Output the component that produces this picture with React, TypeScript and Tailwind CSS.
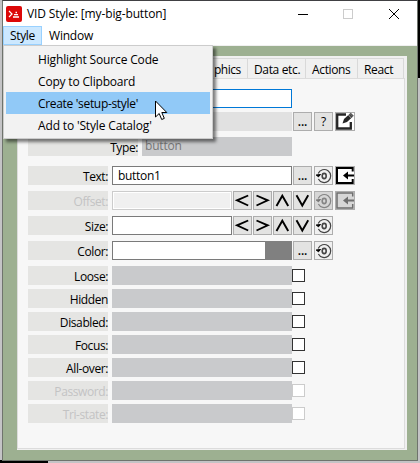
import React from 'react';

type Kids = { children?: React.ReactNode };

function Row({ label, dim, wide, gap, children }: Kids & { label?: string; dim?: boolean; wide?: boolean; gap: string }) {
  return (
    <div className={`flex h-[19px] ${gap}`}>
      <div
        className={`mr-1 flex h-[19px] shrink-0 justify-end bg-[#e5e5e3] leading-[21px] tracking-[-0.4px] ${wide ? 'w-[110px]' : 'w-20'} ${dim ? 'text-[#c3c3c3]' : 'text-black'}`}
      >
        {label}
      </div>
      {children}
    </div>
  );
}

function Btn({ children, ml, dim }: Kids & { ml: string; dim?: boolean }) {
  return (
    <div
      className={`flex h-[19px] w-[19px] shrink-0 items-center justify-center border border-[#adadad] ${dim ? 'bg-[#d6d6d6]' : 'bg-[#e3e3e2]'} ${ml}`}
    >
      {children}
    </div>
  );
}

function Dots() {
  return (
    <Btn ml="ml-px">
      <span className="font-semibold leading-[17px] tracking-[-0.2px]">...</span>
    </Btn>
  );
}

function Reset({ dim }: { dim?: boolean }) {
  const c = dim ? '#858585' : '#444';
  return (
    <Btn ml="ml-0.5" dim={dim}>
      <svg width="17" height="17" viewBox="0 0 17 17" fill="none">
        {!dim && <rect width="17" height="17" fill="#f0f0f0" />}
        <path d="M3.2 6.500A6.500 6.500 0 1 1 3.400 12" stroke={c} strokeWidth="1.200" />
        <path d="M1.200 8l2.300 1.800L5.500 7.500z" fill={dim ? '#777' : '#000'} stroke={dim ? '#777' : '#000'} />
        <ellipse cx="9.200" cy="9" rx="2" ry="2.600" stroke={c} strokeWidth="1.600" />
      </svg>
    </Btn>
  );
}

function Revert({ dim }: { dim?: boolean }) {
  const c = dim ? '#6e6e6e' : '#000';
  return (
    <svg className="ml-0.5 shrink-0" width="20" height="19" viewBox="0 0 20 19" fill="none">
      <rect x=".5" y=".5" width="19" height="18" fill={dim ? '#d6d6d6' : '#fff'} stroke="#adadad" />
      <path d="M17.700 5.500V2H2v15h15.700v-4" stroke={c} strokeWidth={dim ? 1.500 : 2} />
      <path d="M8 9.500l5-4v2.900h6v2.200h-6v2.900z" fill={c} />
    </svg>
  );
}

function Edit() {
  return (
    <svg className="ml-0.5 shrink-0" width="20" height="19" viewBox="0 0 20 19" fill="none">
      <rect x=".5" y=".5" width="19" height="18" fill="#fff" stroke="#adadad" />
      <path d="M11 2.500H2.200v14h13.600V10" stroke="#252525" strokeWidth="2.300" />
      <path d="M7.500 11.500l1.500-4.500 5.500-5 3 3-5.500 5z" fill="#252525" />
      <path d="M14.300 2l1.500-1.300 3 3L17.500 5z" fill="#555" />
      <path d="M13.200 2.800l3.300 3.300" stroke="#fff" strokeWidth=".7" />
    </svg>
  );
}

const arrows = ['M14.200 3.500L3 8.300l11.200 5.200', 'M2.500 3.500l11.200 4.800-11.200 5.200', 'M2.500 14L8.300 3.700 14.200 14', 'M2.500 3.200l5.800 10.300 5.900-10.300'];

function Arrows() {
  return (
    <>
      {arrows.map((d) => (
        <Btn key={d} ml="ml-px">
          <svg width="17" height="17" viewBox="0 0 17 17" fill="none">
            <path d={d} stroke="#000" strokeWidth="1.900" />
          </svg>
        </Btn>
      ))}
    </>
  );
}

const checks = [
  { label: 'Loose:', gap: 'mt-1.5' },
  { label: 'Hidden', gap: 'mt-1' },
  { label: 'Disabled:', gap: 'mt-1' },
  { label: 'Focus:', gap: 'mt-1' },
  { label: 'All-over:', gap: 'mt-1' },
  { label: 'Password:', gap: 'mt-1', dim: true },
  { label: 'Tri-state:', gap: 'mt-1', dim: true },
];

function Tab({ w, children }: Kids & { w: string }) {
  return (
    <div className={`h-5 shrink-0 border-r border-[#d9d9d9] bg-[#f0f0f0] pl-1.5 leading-[21px] tracking-[-0.35px] whitespace-nowrap ${w}`}>
      {children}
    </div>
  );
}

export default function App() {
  return (
    <div className="relative flex h-[463px] w-[420px] overflow-hidden bg-[#c4c4c6] font-['Open_Sans','Noto_Sans',sans-serif] text-[12px] text-black">
      <div className="flex h-[463px] w-0.5 shrink-0 flex-col justify-end">
        <div className="h-[3px] bg-black" />
      </div>
      <div className="flex w-[416px] shrink-0 flex-col">
        <div className="flex h-[461px] flex-col border border-t-[#404043] border-r-[#6f746d] border-b-[#6f746d] border-l-[#6f746d] bg-[#9db091]">
          <div className="flex h-[25px] shrink-0 items-center bg-white pl-[3px]">
            <svg width="16" height="16" viewBox="0 0 16 16" fill="none" className="shrink-0">
              <rect width="16" height="16" rx="2" fill="#dc0808" />
              <path d="M3 5l3 3-3 3" stroke="#fff" strokeWidth="1.200" />
              <path d="M7 11h6M8 8.700h4M9.500 6.500h1.500" stroke="#fff" strokeWidth="1.300" />
            </svg>
            <span className="ml-[5px] w-[180px] tracking-[-0.13px] whitespace-nowrap leading-[25px]">VID Style: [my-big-button]</span>
            <svg width="104" height="14" viewBox="0 0 104 14" fill="none" className="ml-[89px] shrink-0">
              <path d="M2 7.500h10" stroke="#000" />
              <rect x="47.500" y="2.500" width="9" height="9" stroke="#ccc" />
              <path d="M93 2l10 10M103 2L93 12" stroke="#000" />
            </svg>
          </div>
          <div className="flex h-[19px] shrink-0 bg-white leading-[19px]">
            <div className="w-[39px] border border-[#99d1ff] bg-[#cce8ff] pl-1.5 leading-[18px] tracking-[-0.35px]">Style</div>
            <div className="ml-[7px] leading-5 tracking-[-0.2px]">Window</div>
          </div>
          <div className="h-px shrink-0 bg-[#f0f0f0]" />
          <div className="mt-2.5 ml-3.5 flex h-[394px] w-[390px] flex-col bg-[#f0f0f0] pt-0.5">
            <div className="mr-[3px] flex h-5 border-t border-[#d9d9d9] pl-[182px]">
              <Tab w="w-[49px]">
                <span className="ml-[9px] tracking-[-0.5px]">phics</span>
              </Tab>
              <Tab w="w-[58px]">Data etc.</Tab>
              <Tab w="w-[52px]">Actions</Tab>
              <Tab w="w-[46px]">React</Tab>
            </div>
            <div className="mr-0.5 h-[371px] border border-[#dcdcdc] bg-[#f7f7f7] pt-2.5 pl-2.5">
              <Row gap="">
                <div className="w-[180px] border border-[#0078d7] bg-white" />
              </Row>
              <Row gap="mt-1">
                <div className="w-[180px] bg-[#e1e1e1]" />
                <Dots />
                <Btn ml="ml-0.5">
                  <span className="leading-[17px]">?</span>
                </Btn>
                <Edit />
              </Row>
              <Row label="Type:" gap="mt-1.5" wide>
                <div className="w-[150px] bg-[#c9cacc] pl-[3px] leading-[18px] tracking-[-0.2px] text-[#777]">button</div>
              </Row>
              <Row label="Text:" gap="mt-2.5">
                <div className="w-[180px] border border-[#7a7a7a] bg-white pl-[5px] leading-[18px] tracking-[-0.3px]">button1</div>
                <Dots />
                <Reset />
                <Revert />
              </Row>
              <Row label="Offset:" gap="mt-1.5" dim>
                <div className="w-[120px] border border-[#ccc] bg-white p-px">
                  <div className="h-full bg-[#f0f0f0]" />
                </div>
                <Arrows />
                <Reset dim />
                <Revert dim />
              </Row>
              <Row label="Size:" gap="mt-1.5">
                <div className="w-[120px] border border-[#7a7a7a] bg-white" />
                <Arrows />
                <Reset />
              </Row>
              <Row label="Color:" gap="mt-1.5">
                <div className="w-[153px] border border-r-0 border-[#7a7a7a] bg-white" />
                <div className="w-[27px] bg-[#808080]" />
                <Dots />
                <Reset />
              </Row>
              {checks.map((c) => (
                <Row key={c.label} label={c.label} gap={c.gap} dim={c.dim}>
                  <div className="w-[180px] bg-[#c9cacc]" />
                  <div className={`mt-[3px] h-[13px] w-[13px] border bg-white ${c.dim ? 'border-[#ccc]' : 'border-[#333]'}`} />
                </Row>
              ))}
            </div>
          </div>
        </div>
        <div className="flex h-0.5">
          <div className="w-[46px] bg-black" />
        </div>
      </div>
      <div className="w-0.5 shrink-0">
        <div className="h-[78px] bg-black" />
      </div>

      <div className="absolute top-[45px] left-[3px] h-[94px] w-[210px] border border-[#ccc] bg-[#f2f2f2] px-0.5 pt-0.5 leading-[23px] shadow-[3px_3px_3px_rgba(0,0,0,0.5)]">
        <div className="h-[22px] pl-8 tracking-[-0.15px]">Highlight Source Code</div>
        <div className="h-[22px] pl-8 tracking-[-0.18px]">Copy to Clipboard</div>
        <div className="h-[22px] bg-[#91c9f7] pl-8 tracking-[-0.32px]">Create 'setup-style'</div>
        <div className="h-[22px] pl-8 tracking-[-0.15px]">Add to 'Style Catalog'</div>
      </div>
      <svg className="absolute top-[100px] left-[155px]" width="13" height="21" viewBox="0 0 13 21">
        <path d="M.5 1v16l3.700-3.500 2.500 6 2.600-1.100-2.500-5.900h5z" fill="#fff" stroke="#000" />
      </svg>
    </div>
  );
}
